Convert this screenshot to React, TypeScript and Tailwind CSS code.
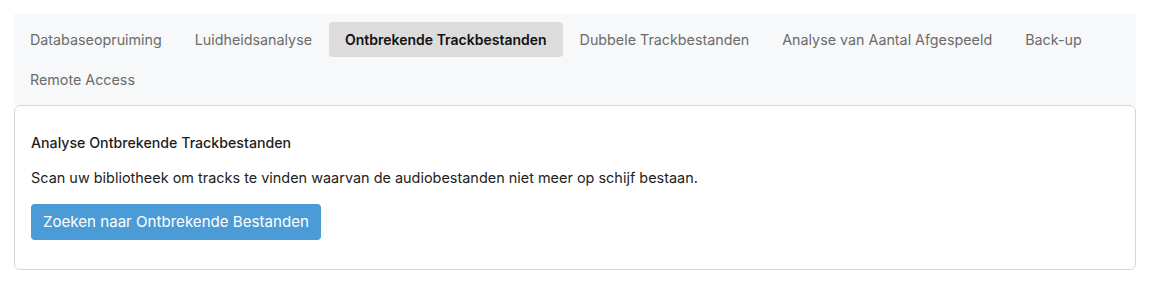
import React from "react";

const tabs = [
  "Databaseopruiming",
  "Luidheidsanalyse",
  "Ontbrekende Trackbestanden",
  "Dubbele Trackbestanden",
  "Analyse van Aantal Afgespeeld",
  "Back-up",
  "Remote Access",
];

export default function App() {
  return (
    <div className="min-h-[286px] bg-white p-[14px] font-['Inter','Noto_Sans',sans-serif] text-[14.3px]">
      <div className="flex flex-wrap gap-x-[1px] gap-y-[5px] bg-[#f7f8fa] py-2">
        {tabs.map((t) => {
          const active = t === "Ontbrekende Trackbestanden";
          return (
            <div
              key={t}
              className={
                "flex h-[35px] items-center rounded-[4px] px-4 " +
                (active ? "bg-[#dcdcdc] text-[14px] font-semibold text-[#111]" : "text-[#6b6b6b]")
              }
            >
              {t}
            </div>
          );
        })}
      </div>
      <div className="rounded-[6px] border border-[#d6d6d6] bg-white px-4 pb-[29px] pt-[27px]">
        <h3 className="text-[14.2px] font-medium leading-5 text-[#1d1d1d]">Analyse Ontbrekende Trackbestanden</h3>
        <p className="mt-[15px] text-[14.45px] leading-5 text-[#222]">
          Scan uw bibliotheek om tracks te vinden waarvan de audiobestanden niet meer op schijf bestaan.
        </p>
        <button className="mt-4 h-9 rounded-[4px] bg-[#4a9bd6] px-3 text-[15.1px] text-white">
          Zoeken naar Ontbrekende Bestanden
        </button>
      </div>
    </div>
  );
}
